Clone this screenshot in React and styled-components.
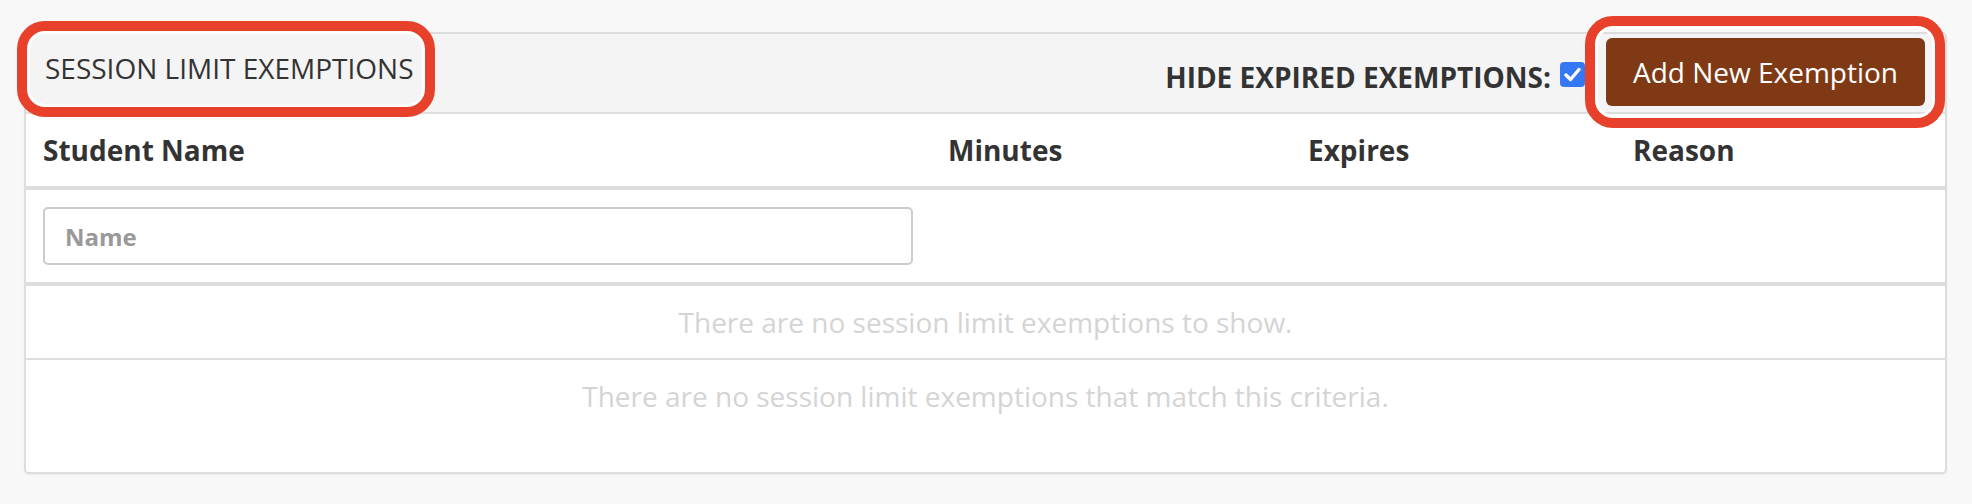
import React from "react";
import styled, { createGlobalStyle } from "styled-components";

const GlobalStyle = createGlobalStyle`
    html, body{
        margin: 0;
        padding: 0;
        background: #f8f8f8;
        font-family: "Open Sans", "Liberation Sans", sans-serif;
        color: #333;
    }
    *{
        box-sizing: border-box;
    }
`;

const Page = styled.div`
    padding: 32px 25px 30px 24px;
`;

const Panel = styled.section`
    background: #fff;
    border: 2px solid #ddd;
    border-radius: 5px;
    box-shadow: 0 1px 2px rgba(0, 0, 0, 0.06);
    padding-bottom: 40px;
`;

const PanelHeader = styled.header`
    display: flex;
    justify-content: space-between;
    align-items: flex-start;
    height: 80px;
    padding: 0 20px 0 19px;
    background: #f4f4f4;
    border-bottom: 2px solid #ddd;
`;

// the red rings are annotations drawn over the screenshot
const Annotated = styled.div`
    position: relative;
    margin-top: ${props => props.$offset || 0}px;

    &::after{
        content: "";
        position: absolute;
        top: ${props => props.$top}px;
        left: ${props => props.$left}px;
        right: ${props => props.$right}px;
        bottom: ${props => props.$bottom}px;
        border: 10px solid #e8412b;
        border-radius: 28px;
        box-shadow: inset 0 0 0 3px #fff;
        pointer-events: none;
    }
`;

const Title = styled.h2`
    margin: 0;
    font-size: 28px;
    line-height: 40px;
    font-weight: 400;
    color: #333;
    white-space: nowrap;
`;

const HeaderTools = styled.div`
    display: flex;
    align-items: center;
    padding-top: 4px;
`;

const HideLabel = styled.span`
    margin-top: 10px;
    font-size: 28px;
    line-height: 40px;
    font-weight: 700;
    color: #333;
    white-space: nowrap;
`;

const Checkbox = styled.span`
    display: inline-flex;
    align-items: center;
    justify-content: center;
    width: 25px;
    height: 25px;
    margin: 5px 21px 0 9px;
    border-radius: 4px;
    background: #3478f6;
`;

const AddButton = styled.button`
    height: 68px;
    padding: 0 27px;
    border: none;
    border-radius: 6px;
    background: #7f3a15;
    color: #fff;
    font-family: inherit;
    font-size: 28px;
    font-weight: 400;
    cursor: pointer;
`;

const Row = styled.div`
    display: grid;
    grid-template-columns: 905px 360px 325px 1fr;
    align-items: center;
    height: ${props => props.$height + props.$border}px;
    border-bottom: ${props => props.$border}px solid #ddd;
`;

const HeadCell = styled.div`
    padding: 0 17px;
    font-size: 28px;
    line-height: 40px;
    font-weight: 700;
    color: #333;
`;

const FilterCell = styled.div`
    padding: 0 17px;
`;

const NameInput = styled.input`
    display: block;
    width: 870px;
    height: 58px;
    padding: 0 20px;
    border: 2px solid #ccc;
    border-radius: 5px;
    background: #fff;
    font-family: inherit;
    font-size: 24px;
    font-weight: 700;
    color: #333;
    outline: none;

    &::placeholder{
        color: #999;
    }
`;

const Message = styled.div`
    display: flex;
    align-items: center;
    justify-content: center;
    height: ${props => 72 + props.$border}px;
    border-bottom: ${props => props.$border}px solid #ddd;
    font-size: 28px;
    line-height: 40px;
    color: #d4d4d4;
`;

const CheckIcon = () => (
    <svg width="17" height="15" viewBox="0 0 17 15">
        <path d="M2 8 L6.5 12.5 L15 2.5" fill="none" stroke="#fff" strokeWidth="3.4" strokeLinecap="round" strokeLinejoin="round" />
    </svg>
);

export default function App() {
    const columns = ["Student Name", "Minutes", "Expires", "Reason"];

    return(
        <Page>
            <GlobalStyle />
            <Panel>
                <PanelHeader>
                    <Annotated $offset={14} $top={-27} $left={-28} $right={-22} $bottom={-29}>
                        <Title>SESSION LIMIT EXEMPTIONS</Title>
                    </Annotated>
                    <HeaderTools>
                        <HideLabel>HIDE EXPIRED EXEMPTIONS:</HideLabel>
                        <Checkbox role="checkbox" aria-checked="true">
                            <CheckIcon />
                        </Checkbox>
                        <Annotated $top={-22} $left={-21} $right={-20} $bottom={-22}>
                            <AddButton>Add New Exemption</AddButton>
                        </Annotated>
                    </HeaderTools>
                </PanelHeader>

                <Row $height={72} $border={4}>
                    {columns.map(col => <HeadCell key={col}>{col}</HeadCell>)}
                </Row>

                <Row $height={92} $border={4}>
                    <FilterCell>
                        <NameInput placeholder="Name" />
                    </FilterCell>
                </Row>

                <Message $border={2}>There are no session limit exemptions to show.</Message>
                <Message $border={0}>There are no session limit exemptions that match this criteria.</Message>
            </Panel>
        </Page>
    );
}
